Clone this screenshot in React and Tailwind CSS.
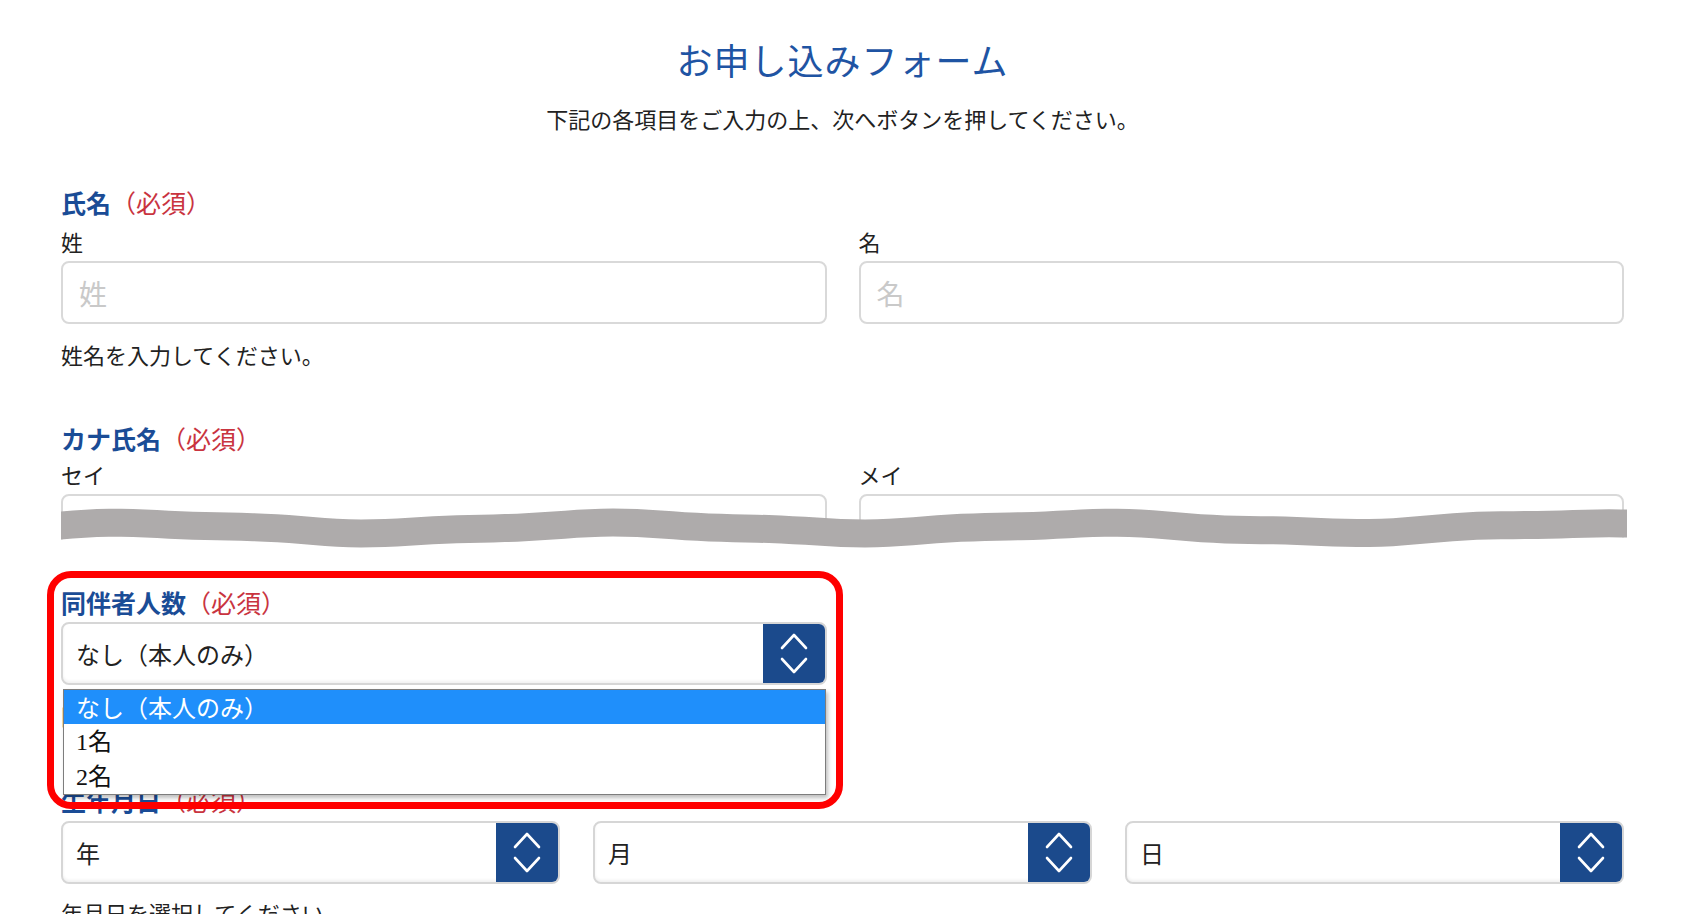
import React from 'react';

const jp = "font-['Noto_Sans_CJK_JP',sans-serif]";

// wavy "cut" band drawn over the truncated form
function wavePaths() {
  const w = 1566;
  const top = (x) =>
    12 - 4.5 * Math.sin((2 * Math.PI * x) / 480 + 0.6) - 1 * Math.sin((2 * Math.PI * x) / 170);
  const pts = [];
  for (let x = 0; x <= w; x += 12) pts.push(x);
  if (pts[pts.length - 1] !== w) pts.push(w);
  const topLine = pts.map((x) => `${x},${top(x).toFixed(2)}`);
  const botLine = pts.map((x) => `${x},${(top(x) + 28).toFixed(2)}`);
  const band = `M${topLine.join(' L')} L${[...botLine].reverse().join(' L')} Z`;
  const mask = `M${botLine.join(' L')} L${w},48 L0,48 Z`;
  return { band, mask };
}

function SectionLabel({ children }) {
  return (
    <div className="text-[25px] leading-[32px]">
      <span className="font-bold text-[#1a4c96]">{children}</span>
      <span className="text-[#c9343f]">（必須）</span>
    </div>
  );
}

function SubLabel({ children }) {
  return <div className="text-[22px] leading-[28px] text-[#222]">{children}</div>;
}

function TextBox({ placeholder }) {
  return (
    <div className="h-[63px] rounded-lg border-2 border-[#d9d9d9] bg-white px-4 flex items-center">
      <span className="text-[28px] text-[#c9c9c9]">{placeholder}</span>
    </div>
  );
}

function Chevrons() {
  return (
    <svg width="28" height="44" viewBox="0 0 28 44" fill="none" stroke="white" strokeWidth="2.6" strokeLinecap="round" strokeLinejoin="round">
      <polyline points="2,16 14,3 26,16" />
      <polyline points="2,27 14,40 26,27" />
    </svg>
  );
}

function SelectBox({ value }) {
  return (
    <div className="h-[63px] rounded-lg border-2 border-[#d6d6d6] bg-white flex overflow-hidden shadow-[inset_0_-2px_3px_rgba(0,0,0,0.06)]">
      <div className="flex-1 flex items-center pl-[13px] text-[24px] text-[#222]">{value}</div>
      <div className="w-[62px] bg-[#1b4a8c] flex items-center justify-center">
        <Chevrons />
      </div>
    </div>
  );
}

function Help({ children, className = '' }) {
  return <div className={`text-[22px] leading-[28px] text-[#222] ${className}`}>{children}</div>;
}

export default function App() {
  const { band, mask } = wavePaths();

  return (
    <div className={`h-[914px] overflow-hidden bg-white ${jp}`}>
      <div className="pl-[61px] pr-[58px] pt-[32px]">
        {/* Header */}
        <h1 className="text-center text-[36px] leading-[54px] text-[#1f54a3] tracking-[1px]">お申し込みフォーム</h1>
        <p className="mt-[17px] text-center text-[22px] leading-[30px] text-[#222]">
          下記の各項目をご入力の上、次へボタンを押してください。
        </p>

        {/* 氏名 */}
        <div className="mt-[53px]">
          <SectionLabel>氏名</SectionLabel>
          <div className="mt-[9px] grid grid-cols-2 gap-x-[32px]">
            <div>
              <SubLabel>姓</SubLabel>
              <div className="mt-[6px]">
                <TextBox placeholder="姓" />
              </div>
            </div>
            <div>
              <SubLabel>名</SubLabel>
              <div className="mt-[6px]">
                <TextBox placeholder="名" />
              </div>
            </div>
          </div>
          <Help className="mt-[16px]">姓名を入力してください。</Help>
        </div>

        {/* カナ氏名 (cut off) */}
        <div className="mt-[54px]">
          <SectionLabel>カナ氏名</SectionLabel>
          <div className="mt-[6px] grid grid-cols-2 gap-x-[32px]">
            <SubLabel>セイ</SubLabel>
            <SubLabel>メイ</SubLabel>
          </div>
          <div className="relative mt-[6px] h-[92px]">
            <div className="h-[46px] overflow-hidden grid grid-cols-2 gap-x-[32px]">
              <div className="h-[62px] rounded-lg border-2 border-[#d9d9d9]" />
              <div className="h-[62px] rounded-lg border-2 border-[#d9d9d9]" />
            </div>
            <svg
              className="absolute left-0 right-[-3px] top-[8px] h-[48px]"
              viewBox="0 0 1566 48"
              preserveAspectRatio="none"
            >
              <path d={mask} fill="white" />
              <path d={band} fill="#aeabab" />
            </svg>
          </div>
        </div>

        {/* 同伴者人数 */}
        <div className="relative">
          <SectionLabel>同伴者人数</SectionLabel>
          <div className="mt-[4px] grid grid-cols-2 gap-x-[32px]">
            <div className="relative">
              <SelectBox value="なし（本人のみ）" />
              <Help className="mt-[16px]">同伴者人数を選択してください。</Help>

              {/* open option list */}
              <div className="absolute left-[2px] right-[1px] top-[67px] z-10 border border-[#7d7d7d] bg-white shadow-[2px_3px_4px_rgba(0,0,0,0.25)] font-['Liberation_Serif','Noto_Sans_CJK_JP',serif] text-[24px]">
                <div className="h-[34px] bg-[#1f8ffb] pl-[12px] flex items-center text-white font-['Noto_Sans_CJK_JP',sans-serif]">
                  なし（本人のみ）
                </div>
                <div className="h-[35px] pl-[12px] flex items-center text-[#111]">1名</div>
                <div className="h-[35px] pl-[12px] flex items-center text-[#111]">2名</div>
              </div>
            </div>
          </div>

          {/* annotation frame */}
          <div className="pointer-events-none absolute left-[-14px] top-[-15px] z-20 h-[238px] w-[796px] rounded-[24px] border-[7px] border-[#ff0000]" />
        </div>

        {/* 生年月日 */}
        <div className="mt-[55px]">
          <SectionLabel>生年月日</SectionLabel>
          <div className="mt-[5px] grid grid-cols-3 gap-x-[33px]">
            <SelectBox value="年" />
            <SelectBox value="月" />
            <SelectBox value="日" />
          </div>
          <Help className="mt-[14px]">年月日を選択してください。</Help>
        </div>
      </div>
    </div>
  );
}
